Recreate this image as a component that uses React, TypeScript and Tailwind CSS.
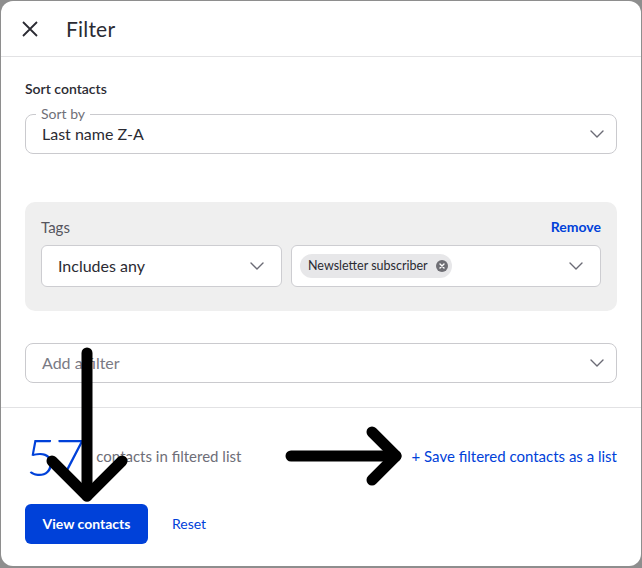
import { ChevronDown } from "lucide-react";

const font = { fontFamily: "Lato, 'Open Sans', sans-serif" };

function Chevron() {
  return <ChevronDown size={24} strokeWidth={1.4} className="shrink-0 text-[#6b6b75]" aria-hidden="true" />;
}

/** Hand-drawn annotation arrows that sit over the panel. */
function Arrows() {
  return (
    <svg
      className="pointer-events-none absolute inset-0"
      width={642}
      height={568}
      viewBox="0 0 642 568"
      fill="none"
      stroke="#000"
      strokeWidth={11}
      strokeLinecap="round"
      strokeLinejoin="round"
      aria-hidden="true"
    >
      <path d="M87 353 V496" />
      <path d="M52 461 L87 496 L122 461" />
      <path d="M291 456 H396" />
      <path d="M372 432 L396 456 L372 480" />
    </svg>
  );
}

export default function App() {
  return (
    <div className="relative h-[568px] w-[642px] bg-[#8e8e8e] pt-px pl-px pr-px" style={font}>
      <div className="flex h-[565px] flex-col overflow-hidden rounded-[12px] bg-white">
        <header className="flex h-[56px] shrink-0 items-center border-b border-[#e2e2e4] pl-[21px]">
          <svg width="16" height="16" viewBox="0 0 16 16" stroke="#2b2b33" strokeWidth="1.8" aria-hidden="true">
            <path d="M1 1 L15 15 M15 1 L1 15" />
          </svg>
          <h1 className="ml-[28px] text-[21px] font-normal leading-none tracking-[0.2px] text-[#2b2b33]">Filter</h1>
        </header>

        <div className="flex flex-col px-[24px]">
          <p className="mt-[22px] text-[14px] font-semibold leading-[20px] text-[#2b2b33]">Sort contacts</p>

          <div className="relative mt-[15px] flex h-[40px] items-center justify-between rounded-[8px] border border-[#cacace] pl-[16px] pr-[7px]">
            <span className="absolute -top-[9px] left-[10px] bg-white px-[5px] text-[14px] leading-[16px] text-[#707078]">
              Sort by
            </span>
            <span className="text-[16px] text-[#2b2b33]">Last name Z-A</span>
            <Chevron />
          </div>

          <section className="mt-[48px] rounded-[10px] bg-[#efefef] px-[16px] pb-[24px] pt-[15px]">
            <div className="flex items-center justify-between leading-[20px]">
              <span className="text-[15px] text-[#55555d]">Tags</span>
              <button type="button" className="text-[14px] font-bold text-[#0041d9]">
                Remove
              </button>
            </div>
            <div className="mt-[8px] grid grid-cols-[241px_1fr] gap-[9px]">
              <div className="flex h-[42px] items-center justify-between rounded-[6px] border border-[#cdcdd1] bg-white pl-[16px] pr-[12px]">
                <span className="text-[16px] text-[#2b2b33]">Includes any</span>
                <Chevron />
              </div>
              <div className="flex h-[42px] items-center justify-between rounded-[6px] border border-[#cdcdd1] bg-white pl-[8px] pr-[12px]">
                <span className="flex h-[24px] items-center gap-[8px] rounded-full bg-[#e7e7e9] pl-[8px] pr-[4px] text-[12.5px] text-[#2b2b33]">
                  Newsletter subscriber
                  <svg width="12" height="12" viewBox="0 0 12 12" aria-hidden="true">
                    <circle cx="6" cy="6" r="6" fill="#6e6e74" />
                    <path d="M4 4 L8 8 M8 4 L4 8" stroke="#fff" strokeWidth="1.4" strokeLinecap="round" />
                  </svg>
                </span>
                <Chevron />
              </div>
            </div>
          </section>

          <div className="mt-[32px] flex h-[40px] items-center justify-between rounded-[8px] border border-[#cacace] pl-[16px] pr-[7px]">
            <span className="text-[16px] text-[#7a7a84]">Add a filter</span>
            <Chevron />
          </div>
        </div>

        <footer className="mt-[24px] flex flex-1 flex-col border-t border-[#e2e2e4] px-[24px]">
          <div className="mt-[24px] flex h-[48px] items-center justify-between">
            <div className="flex items-center">
              <span className="ml-px text-[52px] font-light leading-none tracking-[-1px] text-[#0041d9]">57</span>
              <span className="ml-[12px] text-[15px] text-[#6e6e78]">contacts in filtered list</span>
            </div>
            <button type="button" className="text-[15px] text-[#0041d9]">
              + Save filtered contacts as a list
            </button>
          </div>
          <div className="mt-[24px] flex items-center">
            <button
              type="button"
              className="h-[40px] w-[123px] rounded-[6px] bg-[#0041d9] pb-[2px] text-[14px] font-bold text-white"
            >
              View contacts
            </button>
            <button type="button" className="ml-[24px] pb-[2px] text-[14px] text-[#0041d9]">
              Reset
            </button>
          </div>
        </footer>
      </div>
      <Arrows />
    </div>
  );
}
